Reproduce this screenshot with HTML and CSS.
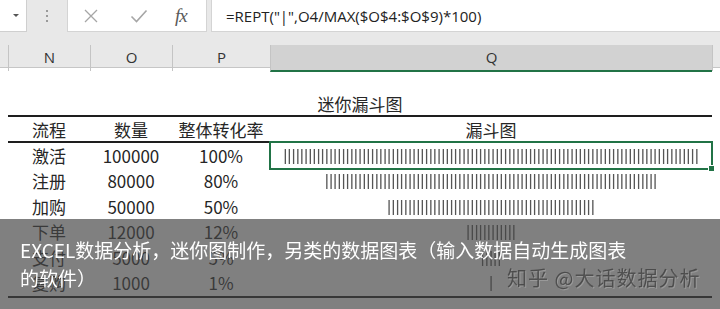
FILE: index.html
```html
<!DOCTYPE html>
<html lang="zh-CN">
<head>
    <meta charset="UTF-8">
    <meta name="viewport" content="width=device-width, initial-scale=1.0">
    <title>迷你漏斗图</title>
    <link rel="stylesheet" href="styles.css">
</head>
<body>
    <div class="toolbar">
        <div class="namebox"><span class="caret"></span></div>
        <div class="grip"><i></i><i></i><i></i></div>
        <div class="fxbuttons">
            <svg class="icon" width="16" height="16" viewBox="0 0 16 16">
                <path d="M2 2 L14 14 M14 2 L2 14" stroke="#a6a6a6" stroke-width="1.3" fill="none"/>
            </svg>
            <svg class="icon" width="18" height="14" viewBox="0 0 18 14">
                <path d="M1.5 7.5 L6.5 12.5 L16.5 1.5" stroke="#a6a6a6" stroke-width="1.6" fill="none"/>
            </svg>
            <span class="fx">fx</span>
        </div>
        <div class="formula">=REPT("|",O4/MAX($O$4:$O$9)*100)</div>
    </div>

    <div class="colheads">
        <div class="colhead"></div>
        <div class="colhead">N</div>
        <div class="colhead">O</div>
        <div class="colhead">P</div>
        <div class="colhead active">Q</div>
        <div class="colhead"></div>
    </div>

    <div class="sheet">
        <div class="title">迷你漏斗图</div>
        <div class="row head">
            <span>流程</span><span>数量</span><span>整体转化率</span><span>漏斗图</span>
        </div>
        <div class="row">
            <span>激活</span><span>100000</span><span>100%</span>
            <span class="bars selected">||||||||||||||||||||||||||||||||||||||||||||||||||||||||||||||||||||||||||||||||||||||||||||||||||||</span>
        </div>
        <div class="row">
            <span>注册</span><span>80000</span><span>80%</span>
            <span class="bars">||||||||||||||||||||||||||||||||||||||||||||||||||||||||||||||||||||||||||||||||</span>
        </div>
        <div class="row">
            <span>加购</span><span>50000</span><span>50%</span>
            <span class="bars">||||||||||||||||||||||||||||||||||||||||||||||||||</span>
        </div>
        <div class="row">
            <span>下单</span><span>12000</span><span>12%</span>
            <span class="bars">||||||||||||</span>
        </div>
        <div class="row">
            <span>支付</span><span>5000</span><span>5%</span>
            <span class="bars">|||||</span>
        </div>
        <div class="row last">
            <span>复购</span><span>1000</span><span>1%</span>
            <span class="bars">|</span>
        </div>
    </div>

    <div class="caption">
        <p class="caption-text">EXCEL数据分析，迷你图制作，另类的数据图表（输入数据自动生成图表<br>的软件）</p>
        <span class="watermark">知乎 @大话数据分析</span>
    </div>
</body>
</html>
```

FILE: styles.css
```css
* {
  margin: 0;
  padding: 0;
  box-sizing: border-box;
}

body {
  width: 720px;
  height: 309px;
  overflow: hidden;
  position: relative;
  background-color: #fff;
  font-family: "Noto Sans CJK SC", "Noto Sans", sans-serif;
  color: #262626;
}

/* formula bar */
.toolbar {
  display: flex;
  height: 45px;
  background-color: #e8e8e8;
}

.namebox {
  width: 27px;
  height: 32px;
  background-color: #fff;
  border-right: 1px solid #cfcfcf;
  border-bottom: 1px solid #cfcfcf;
  position: relative;
}

.caret {
  position: absolute;
  left: 13px;
  top: 14px;
  border-left: 3px solid transparent;
  border-right: 3px solid transparent;
  border-top: 3px solid #555;
}

.grip {
  width: 40px;
  height: 32px;
  display: flex;
  flex-direction: column;
  align-items: center;
  justify-content: center;
  gap: 3px;
}

.grip i {
  display: block;
  width: 2px;
  height: 2px;
  background-color: #9a9a9a;
}

.fxbuttons {
  width: 140px;
  height: 32px;
  background-color: #fff;
  border: 1px solid #d4d4d4;
  border-top: none;
  display: flex;
  align-items: center;
  padding-left: 15px;
}

.fxbuttons .icon:first-child {
  margin-right: 31px;
}

.fxbuttons .icon:nth-child(2) {
  margin-right: 27px;
}

.fx {
  font-family: "Liberation Serif", serif;
  font-style: italic;
  font-size: 19px;
  color: #5a5a5a;
  letter-spacing: -1px;
}

.formula {
  flex: 1;
  height: 32px;
  margin-left: 4px;
  background-color: #fff;
  border-left: 1px solid #d4d4d4;
  border-bottom: 1px solid #d4d4d4;
  padding-left: 14px;
  font-family: "Open Sans", sans-serif;
  font-size: 15px;
  line-height: 32px;
  color: #222;
}

/* column letters */
.colheads {
  display: grid;
  grid-template-columns: 8px 82px 82px 98px 442px 8px;
  height: 23px;
  background-color: #e8e8e8;
  border-bottom: 1px solid #c6c6c6;
}

.colhead {
  border-left: 1px solid #c4c4c4;
  text-align: center;
  font-family: "Open Sans", sans-serif;
  font-size: 15px;
  line-height: 25px;
  color: #333;
}

.colhead:first-child {
  border-left: none;
}

.colhead.active {
  background-color: #d2d2d2;
  border-bottom: 2px solid #217346;
  margin-bottom: -1px;
}

/* worksheet */
.sheet {
  margin: 0 8px;
  width: 704px;
}

.title {
  height: 49px;
  padding-top: 24px;
  border-bottom: 2px solid #1e1e1e;
  text-align: center;
  font-size: 17px;
  line-height: 24px;
}

.row {
  display: grid;
  grid-template-columns: 82px 82px 98px 442px;
  height: 25.5px;
  align-items: center;
  text-align: center;
  font-size: 17px;
  line-height: 24px;
}

.row.head {
  height: 26px;
  border-bottom: 2px solid #1e1e1e;
  align-items: start;
  padding-top: 1px;
}

.row.last {
  height: 27.5px;
  border-bottom: 2px solid #1e1e1e;
  align-items: start;
}

.bars {
  font-family: "Liberation Sans", sans-serif;
  font-size: 16px;
  color: #555;
  white-space: nowrap;
  overflow: hidden;
  will-change: transform;
}

.bars.selected {
  position: relative;
  overflow: visible;
  height: 100%;
  line-height: 25px;
}

.bars.selected::before {
  content: "";
  position: absolute;
  top: -2px;
  left: -1px;
  right: -1px;
  bottom: -1px;
  border: 2px solid #217346;
}

.bars.selected::after {
  content: "";
  position: absolute;
  right: -3px;
  bottom: -3px;
  width: 5px;
  height: 5px;
  background-color: #217346;
  border: 1px solid #fff;
}

/* caption over the screenshot */
.caption {
  position: absolute;
  left: 0;
  top: 219px;
  width: 720px;
  height: 90px;
  background-color: rgba(68, 68, 68, 0.68);
}

.caption-text {
  padding: 17px 0 0 20px;
  font-size: 19px;
  line-height: 28px;
  color: #fff;
}

.watermark {
  position: absolute;
  left: 507px;
  top: 47px;
  font-size: 20px;
  line-height: 24px;
  letter-spacing: 1px;
  color: rgba(40, 40, 40, 0.6);
  text-shadow: 1px 1px 0 rgba(255, 255, 255, 0.2);
}
```
